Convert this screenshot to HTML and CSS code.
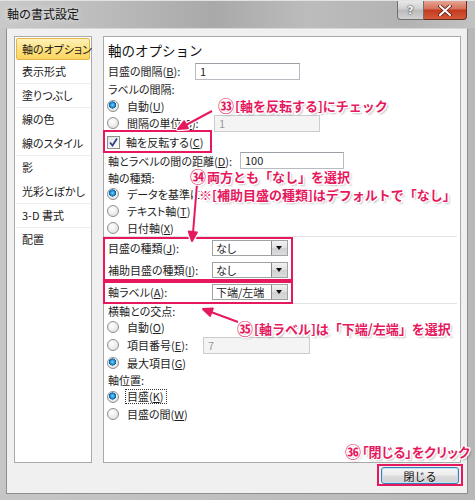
FILE: index.html
```html
<!DOCTYPE html>
<html lang="ja">
<head>
<meta charset="utf-8">
<title>軸の書式設定</title>
<link rel="stylesheet" href="styles.css">
</head>
<body>
<div class="window">
  <div class="titlebar">
    <span class="title">軸の書式設定</span>
    <div class="tb-buttons">
      <div class="btn-help">?</div>
      <div class="btn-close">
        <svg width="14" height="11" viewBox="0 0 14 11"><path d="M2 1 L12 10 M12 1 L2 10" stroke="#5a1a10" stroke-width="3.6" stroke-linecap="round"/><path d="M2 1 L12 10 M12 1 L2 10" stroke="#fff" stroke-width="2" stroke-linecap="round"/></svg>
      </div>
    </div>
  </div>
  <div class="frame">
    <div class="client">
      <div class="main">
        <ul class="nav">
          <li class="nav-item active">軸のオプション</li>
          <li class="nav-item sep">表示形式</li>
          <li class="nav-item sep">塗りつぶし</li>
          <li class="nav-item">線の色</li>
          <li class="nav-item sep">線のスタイル</li>
          <li class="nav-item">影</li>
          <li class="nav-item sep">光彩とぼかし</li>
          <li class="nav-item sep">3-D 書式</li>
          <li class="nav-item">配置</li>
        </ul>
        <div class="panel">
          <div class="heading">軸のオプション</div>
          <div class="row r20"><span class="lbl w87">目盛の間隔(<u>B</u>):</span><span class="input w105">1</span></div>
          <div class="row r16">ラベルの間隔:</div>
          <div class="row"><span class="radio on"></span>自動(<u>U</u>)</div>
          <div class="row r18"><span class="radio"></span><span class="lbl w87">間隔の単位(<u>S</u>):</span><span class="input disabled w106">1</span></div>
          <div class="row r20"><span class="check"><svg width="11" height="11" viewBox="0 0 11 11"><path d="M2 5.5 L4.5 8.5 L9 1.5" fill="none" stroke="#2c3f8c" stroke-width="1.8"/></svg></span>軸を反転する(<u>C</u>)</div>
          <div class="row"><span class="lbl w132">軸とラベルの間の距離(<u>D</u>):</span><span class="input w104">100</span></div>
          <div class="row">軸の種類:</div>
          <div class="row r16"><span class="radio on"></span><span class="lbl">データを基準に</span></div>
          <div class="row"><span class="radio"></span>テキスト軸(<u>T</u>)</div>
          <div class="row"><span class="radio"></span>日付軸(<u>X</u>)</div>
          <div class="sep-line"></div>
          <div class="row r22"><span class="lbl w104">目盛の種類(<u>J</u>):</span><span class="combo"><span class="combo-text">なし</span><span class="combo-btn"></span></span></div>
          <div class="row r22"><span class="lbl w104">補助目盛の種類(<u>I</u>):</span><span class="combo"><span class="combo-text">なし</span><span class="combo-btn"></span></span></div>
          <div class="row r22"><span class="lbl w104">軸ラベル(<u>A</u>):</span><span class="combo"><span class="combo-text">下端/左端</span><span class="combo-btn"></span></span></div>
          <div class="sep-line"></div>
          <div class="row r14">横軸との交点:</div>
          <div class="row r18"><span class="radio"></span>自動(<u>O</u>)</div>
          <div class="row r18"><span class="radio"></span><span class="lbl w76">項目番号(<u>E</u>):</span><span class="input disabled w107">7</span></div>
          <div class="row r18"><span class="radio on"></span>最大項目(<u>G</u>)</div>
          <div class="row r16">軸位置:</div>
          <div class="row"><span class="radio on"></span><span class="focus">目盛(<u>K</u>)</span></div>
          <div class="row"><span class="radio"></span>目盛の間(<u>W</u>)</div>
        </div>
      </div>
      <div class="footer">
        <button class="close-btn">閉じる</button>
      </div>
    </div>
  </div>

  <div class="mark box1"></div>
  <div class="mark box2"></div>
  <div class="mark box3"></div>
  <div class="mark box4"></div>
  <svg class="arrows" width="475" height="500" viewBox="0 0 475 500">
    <g stroke="#fff" stroke-width="4.5" fill="#fff" stroke-linejoin="round">
      <line x1="212" y1="111" x2="186" y2="125"/>
      <polygon points="178,129 187.9,128.3 184.1,121.3"/>
      <line x1="197" y1="184" x2="193" y2="233"/>
      <polygon points="192,241 196.8,232.4 188.8,231.6"/>
      <line x1="238" y1="322" x2="211" y2="312"/>
      <polygon points="203,309 212.8,308.4 210,315.9"/>
    </g>
    <g stroke="#e6195e" stroke-width="2" fill="#e6195e" stroke-linejoin="round">
      <line x1="212" y1="111" x2="186" y2="125"/>
      <polygon points="178,129 187.9,128.3 184.1,121.3"/>
      <line x1="197" y1="184" x2="193" y2="233"/>
      <polygon points="192,241 196.8,232.4 188.8,231.6"/>
      <line x1="238" y1="322" x2="211" y2="312"/>
      <polygon points="203,309 212.8,308.4 210,315.9"/>
    </g>
  </svg>
  <div class="note n1"><span class="cn">㉝</span>[軸を反転する]にチェック</div>
  <div class="note n2"><span class="cn">㉞</span>両方とも「なし」を選択</div>
  <div class="note n3">※[補助目盛の種類]はデフォルトで「なし」</div>
  <div class="note n4"><span class="cn">㉟</span>[軸ラベル]は「下端/左端」を選択</div>
  <div class="note n5"><span class="cn">㊱</span>「閉じる」をクリック</div>
</div>
</body>
</html>
```
FILE: styles.css
```css
* { box-sizing: border-box; }
body {
  margin: 0;
  font-family: "Noto Sans CJK JP", "Noto Sans", sans-serif;
  color: #1e1e1e;
}
u { text-decoration: underline; text-underline-offset: 1px; }

.window {
  position: relative;
  width: 475px;
  height: 500px;
  display: flex;
  flex-direction: column;
  background: #bfbfbf;
  overflow: hidden;
}

/* title bar */
.titlebar {
  height: 28px;
  flex: none;
  display: flex;
  justify-content: space-between;
  align-items: flex-start;
  background: linear-gradient(to right, #c9c9c9 0%, #bdbdbd 20%, #a9a9a9 45%, #bcbcbc 65%, #b3b3b3 85%, #c2c2c2 100%);
  border-top: 1px solid #e2e2e2;
}
.title {
  font-size: 12px;
  line-height: 16px;
  margin: 5px 0 0 7px;
  color: #111;
  text-shadow: 0 0 6px rgba(255,255,255,0.8);
}
.tb-buttons {
  display: flex;
  margin-right: 8px;
}
.btn-help {
  width: 27px;
  height: 19px;
  border: 1px solid #6f6f6f;
  border-top: none;
  border-radius: 0 0 0 4px;
  background: linear-gradient(#e8e8e8, #cfcfcf 45%, #b9b9b9 50%, #d2d2d2);
  font-family: "DejaVu Sans", sans-serif;
  font-size: 11px;
  font-weight: bold;
  color: #f7f7f7;
  text-shadow: 0 0 2px #444, 0 0 1px #333;
  display: flex;
  justify-content: center;
  align-items: center;
}
.btn-close {
  width: 43px;
  height: 19px;
  border: 1px solid #6a2a20;
  border-top: none;
  border-left: none;
  border-radius: 0 0 4px 0;
  background: linear-gradient(#e6a594, #d46e57 45%, #c2391f 50%, #d35a3a);
  display: flex;
  justify-content: center;
  align-items: center;
}

/* frame + client */
.frame {
  flex: 1;
  display: flex;
  padding: 0 7px 6px 6px;
  background: linear-gradient(to right, #c6c6c6, #b8b8b8);
}
.client {
  flex: 1;
  display: flex;
  flex-direction: column;
  background: #f0f0f0;
  border: 1px solid #8f8f8f;
  border-top-color: #d8d8d8;
  padding: 7px 6px 0 7px;
}
.main {
  display: flex;
  gap: 11px;
  height: 427px;
}

/* left nav */
.nav {
  width: 78px;
  margin: 0;
  padding: 1px 0 0;
  list-style: none;
  background: #fff;
  border: 1px solid #a9a9a9;
}
.nav-item {
  height: 24px;
  margin: 0 1px;
  padding-left: 6px;
  font-size: 11px;
  line-height: 22px;
  font-feature-settings: "palt";
  white-space: nowrap;
  color: #1a1a1a;
}
.nav-item.sep { border-bottom: 1px solid #ededed; }
.nav-item.active {
  height: 22px;
  line-height: 20px;
  padding-left: 5px;
  border: 1px solid #e3b54c;
  border-radius: 2px;
  background: linear-gradient(#fff1b8, #fde07c 55%, #fbd45f);
}

/* right panel */
.panel {
  width: 358px;
  background: #fff;
  border: 1px solid #a9a9a9;
  padding: 2px 4px 0 4px;
  font-size: 11px;
  font-feature-settings: "palt";
}
.heading {
  height: 22px;
  font-size: 13.5px;
  line-height: 22px;
  font-feature-settings: normal;
  color: #111;
}
.row {
  height: 17px;
  display: flex;
  align-items: center;
  white-space: nowrap;
}
.r14 { height: 14px; }
.r16 { height: 16px; }
.r18 { height: 18px; }
.r20 { height: 20px; }
.r22 { height: 22px; }

.lbl { flex: none; }
.w76 { width: 76px; }
.w87 { width: 87px; }
.w104 { width: 104px; }
.w132 { width: 132px; }

.input {
  flex: none;
  height: 17px;
  border: 1px solid #b7bcc2;
  border-top-color: #9aa0a6;
  background: #fff;
  padding-left: 4px;
  line-height: 15px;
  font-size: 11px;
}
.input.disabled {
  background: #f4f4f4;
  border-color: #c9cdd1;
  color: #9a9a9a;
}
.input.w104 { width: 104px; }
.input.w105 { width: 105px; }
.input.w106 { width: 106px; }
.input.w107 { width: 107px; }

.radio {
  flex: none;
  width: 12px;
  height: 12px;
  margin: 0 8px 0 -1px;
  border-radius: 50%;
  border: 1px solid #8e8f8f;
  background: radial-gradient(circle at 40% 35%, #ffffff 0%, #e9e9e9 60%, #d4d4d4 100%);
}
.radio.on {
  background:
    radial-gradient(circle at 45% 40%, #7fd0ff 0%, #1e8fd6 28%, #0d5d99 42%, transparent 46%),
    radial-gradient(circle at 40% 35%, #ffffff 0%, #e9e9e9 60%, #d4d4d4 100%);
}
.check {
  flex: none;
  width: 13px;
  height: 13px;
  margin: 0 6px 0 -1px;
  border: 1px solid #8e8f8f;
  background: linear-gradient(135deg, #e2e2e2, #ffffff);
  display: flex;
  align-items: center;
  justify-content: center;
}
.focus {
  border: 1px dotted #333;
  margin-left: -2px;
  padding: 0 2px 0 1px;
  line-height: 13px;
}

.sep-line {
  height: 1px;
  margin: 0 0 0 -4px;
  width: 353px;
  background: #e3e3e3;
}

.combo {
  flex: none;
  width: 76px;
  height: 16px;
  display: flex;
  border: 1px solid #9ea3a8;
  background: #fff;
}
.combo-text {
  flex: 1;
  padding-left: 3px;
  line-height: 14px;
  font-size: 11px;
}
.combo-btn {
  width: 16px;
  border-left: 1px solid #8a8a8a;
  background: linear-gradient(#f2f2f2, #e0e0e0 50%, #d0d0d0 51%, #dcdcdc);
  position: relative;
}
.combo-btn::after {
  content: "";
  position: absolute;
  left: 4px;
  top: 5px;
  border-left: 3.5px solid transparent;
  border-right: 3.5px solid transparent;
  border-top: 4px solid #111;
}

/* footer */
.footer {
  display: flex;
  justify-content: flex-end;
  padding: 4px 2px 0 0;
}
.close-btn {
  width: 78px;
  height: 17px;
  padding: 0;
  border: 1px solid #3c7fb1;
  border-radius: 3px;
  background: linear-gradient(#f6f6f6, #ececec 48%, #dcdcdc 52%, #d3d3d3);
  box-shadow: inset 0 0 0 1px #bfe3f8;
  font-family: "Noto Sans CJK JP", sans-serif;
  font-size: 11px;
  line-height: 14px;
  color: #111;
}

/* annotation overlays */
.mark {
  position: absolute;
  border: 2px solid #e6195e;
}
.box1 { left: 103px; top: 130px; width: 109px; height: 23px; }
.box2 { left: 103px; top: 237px; width: 190px; height: 44px; }
.box3 { left: 103px; top: 281px; width: 190px; height: 23px; }
.box4 { left: 377px; top: 464px; width: 86px; height: 22px; }

.arrows {
  position: absolute;
  left: 0;
  top: 0;
  pointer-events: none;
}
.note {
  position: absolute;
  font-size: 13px;
  font-weight: bold;
  line-height: 16px;
  white-space: nowrap;
  color: #e6195e;
  text-shadow:
    1px 0 0 #fff, -1px 0 0 #fff, 0 1px 0 #fff, 0 -1px 0 #fff,
    1px 1px 0 #fff, -1px -1px 0 #fff, 1px -1px 0 #fff, -1px 1px 0 #fff,
    2px 2px 2px rgba(0,0,0,0.25);
}
.cn {
  font-size: 16px;
  line-height: 14px;
  vertical-align: -1px;
  margin-right: 1px;
}
.n1 { left: 218px; top: 98px; }
.n2 { left: 190px; top: 169px; }
.n3 { left: 199px; top: 187px; }
.n4 { left: 237px; top: 321px; }
.n5 { left: 345px; top: 444px; font-feature-settings: "palt"; }
```
